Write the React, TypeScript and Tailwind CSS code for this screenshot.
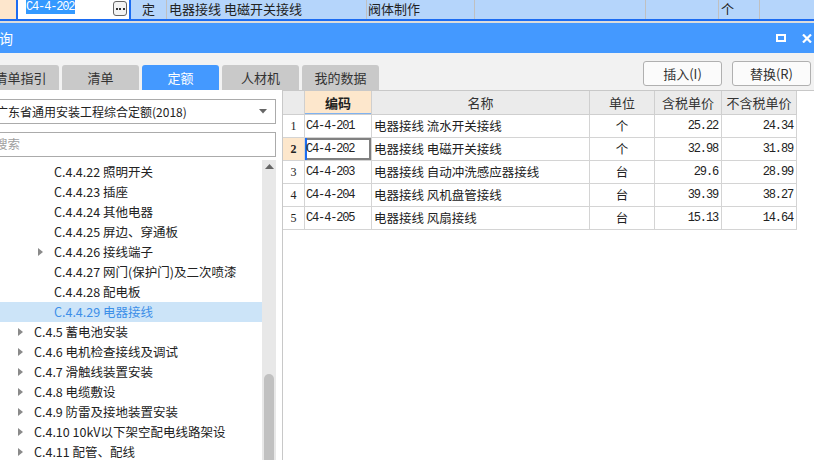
import React from "react";

const rows = [
  { n: "1", code: "C4-4-201", name: "电器接线 流水开关接线", unit: "个", p1: "25.22", p2: "24.34" },
  { n: "2", code: "C4-4-202", name: "电器接线 电磁开关接线", unit: "个", p1: "32.98", p2: "31.89" },
  { n: "3", code: "C4-4-203", name: "电器接线 自动冲洗感应器接线", unit: "台", p1: "29.6", p2: "28.99" },
  { n: "4", code: "C4-4-204", name: "电器接线 风机盘管接线", unit: "台", p1: "39.39", p2: "38.27" },
  { n: "5", code: "C4-4-205", name: "电器接线 风扇接线", unit: "台", p1: "15.13", p2: "14.64" },
];

type TreeItem = { label: string; level: 3 | 4; arrow?: boolean; selected?: boolean };

const tree: TreeItem[] = [
  { label: "C.4.4.22 照明开关", level: 4 },
  { label: "C.4.4.23 插座", level: 4 },
  { label: "C.4.4.24 其他电器", level: 4 },
  { label: "C.4.4.25 屏边、穿通板", level: 4 },
  { label: "C.4.4.26 接线端子", level: 4, arrow: true },
  { label: "C.4.4.27 网门(保护门)及二次喷漆", level: 4 },
  { label: "C.4.4.28 配电板", level: 4 },
  { label: "C.4.4.29 电器接线", level: 4, selected: true },
  { label: "C.4.5 蓄电池安装", level: 3, arrow: true },
  { label: "C.4.6 电机检查接线及调试", level: 3, arrow: true },
  { label: "C.4.7 滑触线装置安装", level: 3, arrow: true },
  { label: "C.4.8 电缆敷设", level: 3, arrow: true },
  { label: "C.4.9 防雷及接地装置安装", level: 3, arrow: true },
  { label: "C.4.10 10kV以下架空配电线路架设", level: 3, arrow: true },
  { label: "C.4.11 配管、配线", level: 3, arrow: true },
];

function Arrow() {
  return (
    <svg width="5" height="8" viewBox="0 0 5 8" className="shrink-0">
      <path d="M0 0 L5 4 L0 8 Z" fill="#8a8a8a" />
    </svg>
  );
}

const tabs = ["清单指引", "清单", "定额", "人材机", "我的数据"];

const mono = "[font-family:'Liberation_Mono',monospace] text-[12px] tracking-[-1.15px]";

export default function App() {
  return (
    <div className="w-[814px] h-[460px] overflow-hidden bg-[#f2f2f2] [font-family:'Noto_Sans_CJK_SC','Noto_Sans',sans-serif] text-[#222]">
      {/* top grid strip */}
      <div className="flex h-[19px] bg-[#b5d5fb] text-[13px] leading-[16px] overflow-hidden">
        <div className="w-[16px] bg-[#fde6cc]" />
        <div className="w-[115px] flex items-start bg-white border-x-2 border-[#1c6cf2] pl-[8px] pr-[2px]">
          <span className={"bg-[#3399ff] text-white leading-[14px] pr-[1px] " + mono}>C4-4-202</span>
          <div className="ml-auto mt-[1px] w-[14px] h-[15px] bg-[#f3f3f3] border border-[#666] rounded-[3px] flex items-center justify-center gap-[1.5px]">
            <span className="w-[2px] h-[2px] bg-[#333]" />
            <span className="w-[2px] h-[2px] bg-[#333]" />
            <span className="w-[2px] h-[2px] bg-[#333]" />
          </div>
        </div>
        <div className="w-[36px] border-r border-[#c0c0c0] text-center pt-[1px]">定</div>
        <div className="w-[200px] border-r border-[#c0c0c0] pl-[2px] pt-[1px]">电器接线 电磁开关接线</div>
        <div className="w-[108px] border-r border-[#c0c0c0] pl-[1px] pt-[1px]">阀体制作</div>
        <div className="w-[171px] border-r border-[#c0c0c0]" />
        <div className="w-[73px] border-r border-[#c0c0c0]" />
        <div className="w-[41px] border-r border-[#c0c0c0] pl-[2px] pt-[1px]">个</div>
        <div className="flex-1" />
      </div>
      <div className="h-[2px] bg-[#1c6cf2]" />
      <div className="h-[2px] bg-[#dcdcdc]" />

      {/* title bar */}
      <div className="h-[30px] bg-[#4499ff] flex items-center text-white">
        <span className="text-[14px] leading-[16px] -ml-[1px]">询</span>
        <div className="ml-auto flex items-center gap-[16px] mr-[2px]">
          <svg width="10" height="8" viewBox="0 0 10 8">
            <rect x="1" y="1" width="8" height="6" fill="none" stroke="#fff" strokeWidth="2" />
          </svg>
          <svg width="10" height="9" viewBox="0 0 10 9">
            <path d="M1 0.5 L9 8.5 M9 0.5 L1 8.5" stroke="#fff" strokeWidth="2.2" />
          </svg>
        </div>
      </div>

      {/* tabs + buttons */}
      <div className="h-[37px] flex">
        <div className="flex items-end gap-[3px]">
          {tabs.map((t, i) => (
            <div
              key={t}
              className={
                "w-[77px] h-[25px] rounded-t-[3px] flex items-center justify-center text-[13px] " +
                (i === 0 ? "-ml-[18px] " : "") +
                (t === "定额" ? "bg-[#4499ff] text-white" : "bg-[#c9c9c9] text-[#333]")
              }
            >
              {t}
            </div>
          ))}
        </div>
        <div className="ml-auto mr-[3px] mt-[8px] flex gap-[10px]">
          {["插入(I)", "替换(R)"].map((b) => (
            <div
              key={b}
              className="w-[79px] h-[25px] border border-[#b0b0b0] rounded-[3px] bg-[#fbfbfb] flex items-center justify-center text-[13px] text-[#333]"
            >
              {b}
            </div>
          ))}
        </div>
      </div>

      {/* body */}
      <div className="flex h-[370px]">
        {/* left panel */}
        <div className="w-[283px] border-r border-[#c8c8c8] bg-white flex flex-col pt-[9px] overflow-hidden">
          <div className="-ml-[10px] mr-[6px] h-[25px] border border-[#ababab] flex items-center pl-[5px] pr-[8px] text-[12px] text-[#222]">
            <span className="whitespace-nowrap">广东省通用安装工程综合定额(2018)</span>
            <svg width="8" height="5" viewBox="0 0 8 5" className="ml-auto">
              <path d="M0 0 L8 0 L4 4.5 Z" fill="#666" />
            </svg>
          </div>
          <div className="-ml-[10px] mr-[6px] mt-[8px] h-[25px] border border-[#ababab] flex items-center pl-[4px] text-[12.5px] text-[#a0a0a0]">
            搜索
          </div>
          <div className="mt-[3px] flex flex-1 overflow-hidden">
            <div className="w-[262px] flex flex-col pt-[2px]">
              {tree.map((it) => (
                <div
                  key={it.label}
                  className={
                    "h-[20px] shrink-0 flex items-center text-[12.5px] whitespace-nowrap " +
                    (it.selected ? "bg-[#cce4f8] text-[#3d8fe8]" : "text-[#222]")
                  }
                >
                  <div className={it.level === 4 ? "w-[54px] flex pl-[38px]" : "w-[34px] flex pl-[18px]"}>
                    {it.arrow ? <Arrow /> : null}
                  </div>
                  <span>{it.label}</span>
                </div>
              ))}
            </div>
            <div className="w-[14px] bg-[#e8e8e8] flex flex-col items-center">
              <svg width="9" height="5" viewBox="0 0 9 5" className="mt-[4px]">
                <path d="M0 5 L4.5 0 L9 5 Z" fill="#666" />
              </svg>
              <div className="mt-[205px] w-[10px] flex-1 bg-[#c1c1c1] rounded-t-[5px]" />
            </div>
          </div>
        </div>

        {/* right panel */}
        <div className="flex-1 bg-white border-t border-[#c8c8c8]">
          <div className="flex h-[24px] text-[13px] text-[#333]">
            <div className="w-[22px] bg-[#ebebeb] border-r border-b border-[#cfcfcf]" />
            <div className="w-[67px] bg-[#fde7cc] border-r border-b border-[#cfcfcf] flex items-center justify-center font-bold text-[#222] shadow-[inset_0_-1px_0_#7fb2f0]">编码</div>
            <div className="w-[218px] bg-[#ebebeb] border-r border-b border-[#cfcfcf] flex items-center justify-center">名称</div>
            <div className="w-[65px] bg-[#ebebeb] border-r border-b border-[#cfcfcf] flex items-center justify-center">单位</div>
            <div className="w-[67px] bg-[#ebebeb] border-r border-b border-[#cfcfcf] flex items-center justify-center">含税单价</div>
            <div className="w-[75px] bg-[#ebebeb] border-r border-b border-[#cfcfcf] flex items-center justify-center">不含税单价</div>
          </div>
          {rows.map((r) => {
            const sel = r.n === "2";
            return (
              <div key={r.n} className="flex h-[23px] text-[12.5px] text-[#222]">
                <div
                  className={
                    "w-[22px] border-r border-b border-[#d4d4d4] flex items-center justify-center [font-family:'Liberation_Serif',serif] text-[12px] " +
                    (sel ? "bg-[#fde7cc] font-bold" : "bg-white")
                  }
                >
                  {r.n}
                </div>
                <div
                  className={
                    "w-[67px] border-b border-r border-[#d4d4d4] flex items-center " +
                    mono +
                    (sel ? " pl-[1px] shadow-[inset_2px_0_0_#1c6cf2,inset_0_0_0_2px_#808080]" : " pl-[1px]")
                  }
                >
                  {r.code}
                </div>
                <div className="w-[218px] border-r border-b border-[#d4d4d4] flex items-center pl-[2px] whitespace-nowrap">{r.name}</div>
                <div className="w-[65px] border-r border-b border-[#d4d4d4] flex items-center justify-center">{r.unit}</div>
                <div className={"w-[67px] border-r border-b border-[#d4d4d4] flex items-center justify-end pr-[3px] " + mono}>{r.p1}</div>
                <div className={"w-[75px] border-r border-b border-[#d4d4d4] flex items-center justify-end pr-[3px] " + mono}>{r.p2}</div>
              </div>
            );
          })}
        </div>
      </div>
    </div>
  );
}
